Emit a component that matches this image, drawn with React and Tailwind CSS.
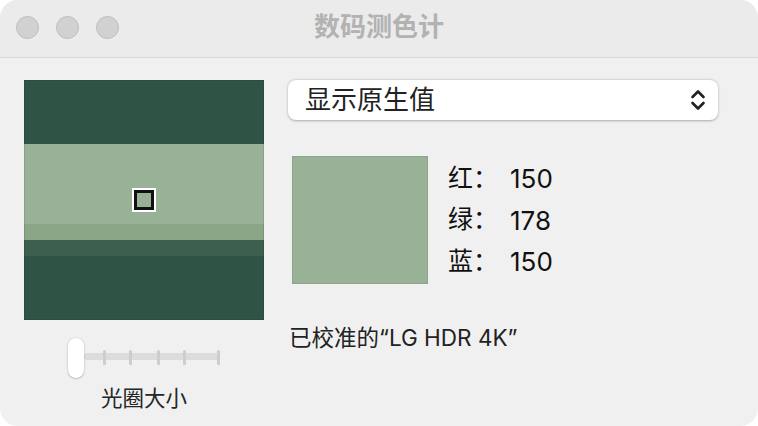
import React from 'react';

const font = { fontFamily: '"Inter", "Noto Sans CJK SC", sans-serif' };

const bands = [
    { h: 'h-[64px]', c: 'bg-[#2f5446]' },
    { h: 'h-[80px]', c: 'bg-[#99b297]' },
    { h: 'h-[16px]', c: 'bg-[#8aa687]' },
    { h: 'h-[16px]', c: 'bg-[#3d5f50]' },
    { h: 'h-[64px]', c: 'bg-[#2f5446]' },
];

const values = [
    { label: '红：', value: 150 },
    { label: '绿：', value: 178 },
    { label: '蓝：', value: 150 },
];

const ticks = [104, 130, 158, 184, 218];

const App = () => {
    return (
        <div className="w-[758px] h-[426px] bg-white" style={font}>
            <div className="w-full h-full rounded-[18px] overflow-hidden bg-[#f0f0f0] flex flex-col">
                {/* Title bar */}
                <div className="h-[58px] shrink-0 bg-[#ebebeb] border-b border-[#d6d6d6] relative flex items-center justify-center">
                    <div className="absolute left-[16px] top-[16px] flex gap-[17px]">
                        <div className="w-[23px] h-[23px] rounded-full bg-[#d1d1d1] border border-[#bdbdbd]" />
                        <div className="w-[23px] h-[23px] rounded-full bg-[#d1d1d1] border border-[#bdbdbd]" />
                        <div className="w-[23px] h-[23px] rounded-full bg-[#d1d1d1] border border-[#bdbdbd]" />
                    </div>
                    <span className="text-[26px] font-semibold text-[#b2b2b2] leading-none -mt-[3px]">数码测色计</span>
                </div>

                {/* Body */}
                <div className="flex pl-[24px] pt-[22px] gap-[24px]">
                    {/* Left column */}
                    <div className="w-[240px] flex flex-col">
                        <div className="relative w-[240px] h-[240px] flex flex-col ring-1 ring-inset ring-black/10">
                            {bands.map((b, i) => (
                                <div key={i} className={`${b.h} ${b.c} shrink-0`} />
                            ))}
                            <div className="absolute inset-0 ring-1 ring-inset ring-black/10" />
                            <div className="absolute left-[108px] top-[108px] w-[24px] h-[24px] border-2 border-white">
                                <div className="w-full h-full border-[3px] border-[#111] bg-[#99b297]" />
                            </div>
                        </div>

                        <div className="relative h-[40px] mt-[18px]">
                            <div className="absolute left-[60px] top-[15px] w-[136px] h-[7px] rounded-full bg-[#dcdcdc]" />
                            {ticks.map((x) => (
                                <div
                                    key={x}
                                    className="absolute top-[12px] w-[3px] h-[15px] rounded-full bg-[#cdcdcd]"
                                    style={{ left: x - 24 - 1 }}
                                />
                            ))}
                            <div className="absolute left-[44px] top-0 w-[16px] h-[40px] rounded-full bg-white shadow-[0_0.5px_2px_rgba(0,0,0,0.35)]" />
                        </div>

                        <div className="mt-[6px] text-center text-[21.5px] leading-[28px] text-[#262626]">光圈大小</div>
                    </div>

                    {/* Right column */}
                    <div className="w-[430px] flex flex-col">
                        <div className="h-[40px] rounded-[8px] bg-white shadow-[0_0.5px_2.5px_rgba(0,0,0,0.3)] flex items-center justify-between pl-[17px] pr-[11px]">
                            <span className="text-[26px] leading-none text-[#222]">显示原生值</span>
                            <svg width="18" height="24" viewBox="0 0 18 24" fill="none" stroke="#222" strokeWidth="2.6" strokeLinecap="round" strokeLinejoin="round">
                                <path d="M3.5 9 L9 3.5 L14.5 9" />
                                <path d="M3.5 15 L9 20.5 L14.5 15" />
                            </svg>
                        </div>

                        <div className="flex items-center mt-[36px] pl-[4px]">
                            <div className="w-[136px] h-[128px] bg-[#99b297] border border-[#8aa687]" />
                            <div className="ml-[20px] flex flex-col">
                                {values.map((v) => (
                                    <div key={v.label} className="flex items-center h-[41.5px] text-[25px] text-[#111]">
                                        <span className="w-[62px]">{v.label}</span>
                                        <span className="text-[26px]">{v.value}</span>
                                    </div>
                                ))}
                            </div>
                        </div>

                        <div className="mt-[40px] pl-[1px] text-[22.5px] leading-[28px] text-[#222]">已校准的“LG HDR 4K”</div>
                    </div>
                </div>
            </div>
        </div>
    );
};

export default App;
